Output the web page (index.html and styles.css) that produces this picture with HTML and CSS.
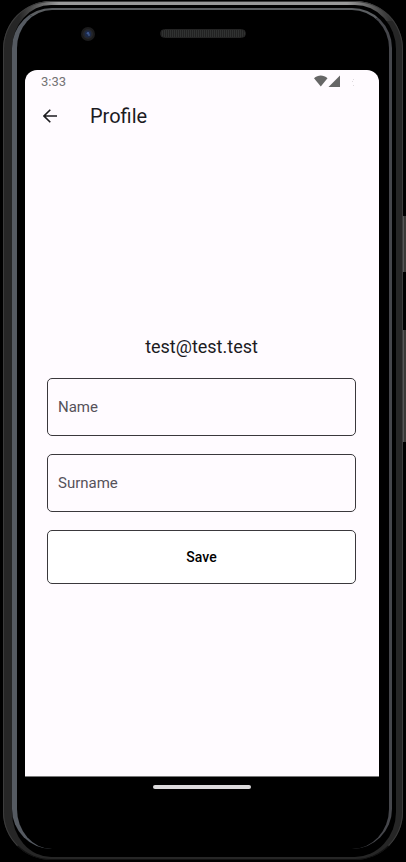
FILE: index.html
```html
<!DOCTYPE html>
<html lang="en">
<head>
<meta charset="utf-8">
<meta name="viewport" content="width=device-width, initial-scale=1">
<title>Profile</title>
<link rel="stylesheet" href="styles.css">
</head>
<body>
<div class="device">
  <span class="key key-power"></span>
  <span class="key key-volume"></span>
  <div class="rim">
    <div class="forehead">
      <svg class="camera" width="14" height="14" viewBox="0 0 14 14" aria-hidden="true">
        <circle cx="7" cy="7" r="7" fill="#1b1b1c"/>
        <circle cx="7" cy="7" r="5" fill="#25262a"/>
        <circle cx="7" cy="7" r="3.4" fill="#1c2947"/>
        <circle cx="7" cy="6.3" r="1.3" fill="#3c568e"/>
        <circle cx="8" cy="8" r=".8" fill="#5771a5"/>
      </svg>
      <span class="speaker"></span>
    </div>
    <div class="screen">
      <div class="status">
        <span>3:33</span>
        <svg width="42" height="12" viewBox="0 0 42 12" aria-hidden="true">
          <path d="M0 3.2C4-.5 9.500-.5 13.500 3.200L6.800 11.500Z" fill="#666"/>
          <path d="M26 .5V12H14.500Z" fill="#666"/>
          <path d="M38 6h1v1h-1zM39 10h1v1h-1zM39 4h1v1h-1z" fill="#dedade"/>
        </svg>
      </div>
      <header class="appbar">
        <button class="back" type="button" aria-label="Back">
          <svg width="14" height="14" viewBox="0 0 14 14" aria-hidden="true">
            <path d="M14 7H1.200M7.300.7L1 7l6.300 6.300" fill="none" stroke="#1c1b1f" stroke-width="1.600"/>
          </svg>
        </button>
        <h1>Profile</h1>
      </header>
      <main>
        <form class="form">
          <p class="email">test@test.test</p>
          <input class="field" type="text" placeholder="Name" aria-label="Name">
          <input class="field" type="text" placeholder="Surname" aria-label="Surname">
          <button class="save" type="button">Save</button>
        </form>
      </main>
    </div>
    <div class="chin"><span class="handle"></span></div>
  </div>
</div>
</body>
</html>
```
FILE: styles.css
```css
* {
  box-sizing: border-box;
}

body {
  margin: 0;
  min-height: 100vh;
  display: flex;
  padding: 1px 3px 2px;
  background: #000;
  color: #1c1b1f;
  font-family: Roboto, sans-serif;
}

.device {
  position: relative;
  flex: 1;
  display: flex;
  padding: 3px 4px 8px 0;
  border: solid transparent;
  border-width: 4px 7px 3px 9px;
  border-radius: 48px;
  background:
    linear-gradient(#000, #000) padding-box,
    linear-gradient(90deg, transparent 16px, #999 56px, #999 calc(100% - 56px), transparent calc(100% - 8px)) top / 100% 20px no-repeat border-box,
    linear-gradient(#262626, #262626) border-box;
}

.device::before {
  content: "";
  position: absolute;
  inset: -4px -7px -3px -9px;
  border: 1px solid #3c3c3c;
  border-bottom-color: #111;
  border-radius: 48px;
}

.key {
  position: absolute;
  right: -10px;
  width: 3px;
  background: #393836;
  border-left: 1px solid #555;
}

.key-power {
  top: 211px;
  height: 56px;
}

.key-volume {
  top: 325px;
  height: 112px;
}

.rim {
  flex: 1;
  display: flex;
  flex-direction: column;
  padding: 0 10px 0 8px;
  border-style: solid;
  border-width: 2px 3px 0 5px;
  border-color: #5b5e61 #45464b transparent #555a61;
  border-radius: 40px;
}

.forehead {
  position: relative;
  height: 60px;
  display: flex;
  justify-content: center;
  padding: 19px 0 0 2px;
}

.camera {
  position: absolute;
  left: 56px;
  top: 17px;
}

.speaker {
  width: 86px;
  height: 9px;
  border: 1px solid #242424;
  border-radius: 5px;
  background: repeating-linear-gradient(90deg, #222 0 1px, #303231 1px 2px);
}

.screen {
  flex: 1;
  display: flex;
  flex-direction: column;
  background: #fffbff;
  border-bottom: 1px solid #777;
  border-radius: 12px 12px 0 0;
}

.status {
  height: 22px;
  display: flex;
  align-items: center;
  justify-content: space-between;
  padding: 0 23px 0 16px;
  color: #747375;
  font-size: 13px;
}

.appbar {
  height: 48px;
  display: flex;
  align-items: center;
  gap: 23px;
  padding-left: 8px;
}

.back {
  width: 34px;
  height: 34px;
  display: grid;
  place-items: center;
  padding: 0;
  border: 0;
  background: none;
}

h1 {
  margin: 0;
  font-size: 20px;
  font-weight: 400;
}

main {
  flex: 1;
  display: grid;
  align-items: center;
  padding: 2px 23px 0 22px;
}

.form {
  display: flex;
  flex-direction: column;
  gap: 18px;
}

.email {
  margin: 0;
  font-size: 18px;
  line-height: 26px;
  text-align: center;
}

.field,
.save {
  width: 100%;
  height: 58px;
  padding: 0 10px;
  border: 1px solid #3a383c;
  border-radius: 5px;
  background: transparent;
  color: #1c1b1f;
  font-family: inherit;
  font-size: 15px;
}

.field::placeholder {
  color: #56525a;
  opacity: 1;
}

.save {
  height: 54px;
  background: #fff;
  color: #000;
  font-size: 14px;
  font-weight: 500;
}

.chin {
  height: 72px;
  display: flex;
  justify-content: center;
  padding-top: 8px;
}

.handle {
  width: 98px;
  height: 4px;
  border-radius: 2px;
  background: #dcdadc;
}
```
